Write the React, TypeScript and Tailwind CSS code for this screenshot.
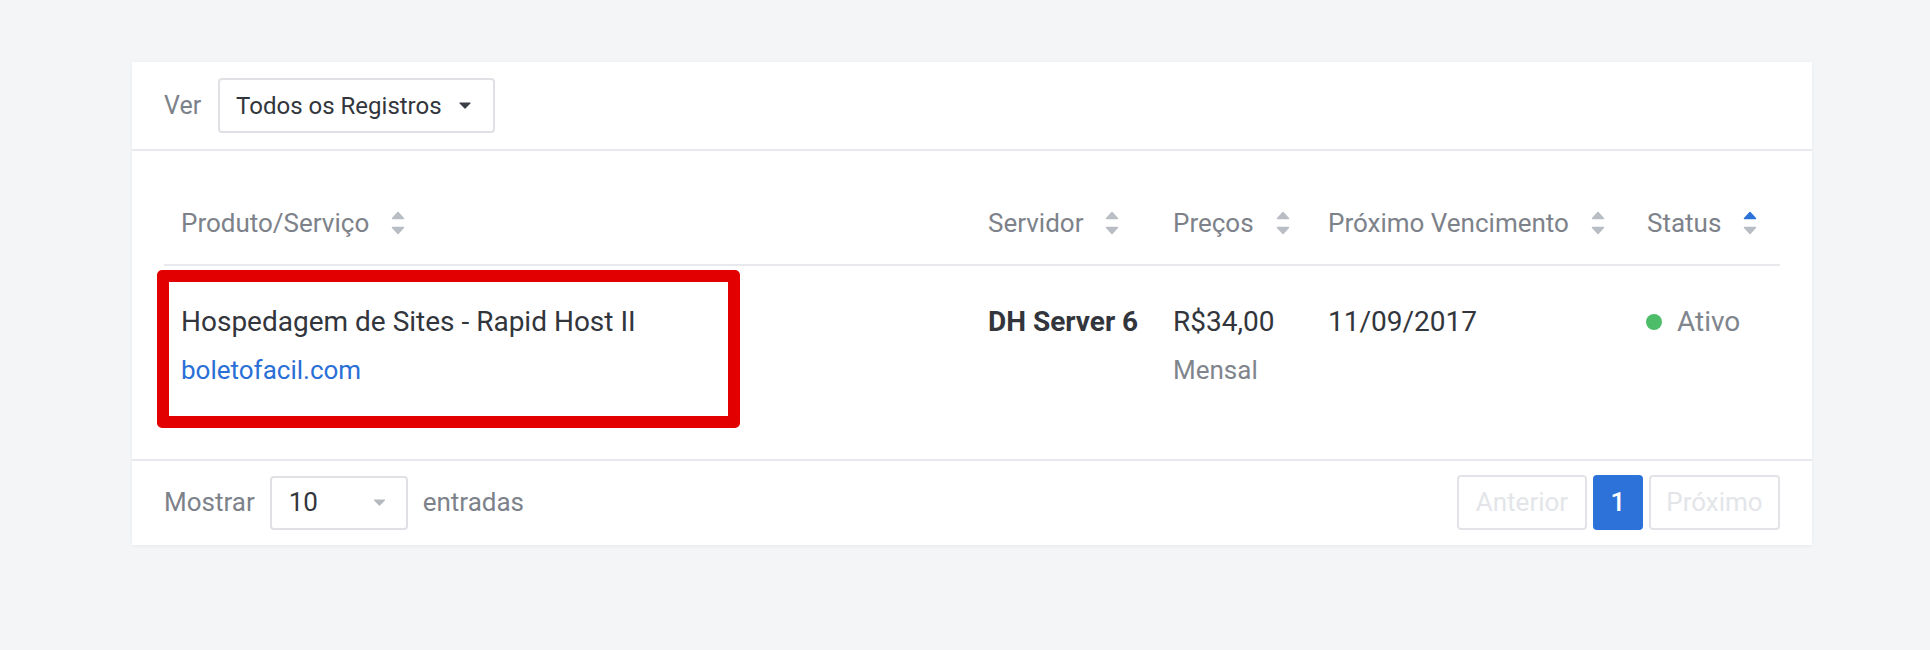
import React from 'react';

type SortState = 'none' | 'asc';

function SortIcon({ state = 'none' }: { state?: SortState }) {
  const up = state === 'asc' ? '#2d72d9' : '#b9bdc4';
  return (
    <svg width="14" height="24" viewBox="0 0 14 24" className="shrink-0">
      <path
        d="M7 1.5 L12.5 7.5 H1.5 Z"
        fill={up}
        stroke={up}
        strokeWidth="1.5"
        strokeLinejoin="round"
      />
      <path
        d="M1.5 16.5 H12.5 L7 22.5 Z"
        fill="#b9bdc4"
        stroke="#b9bdc4"
        strokeWidth="1.5"
        strokeLinejoin="round"
      />
    </svg>
  );
}

function Caret({ color, width = 12, height = 7 }: { color: string; width?: number; height?: number }) {
  return (
    <svg width={width} height={height} viewBox="0 0 12 7" className="shrink-0">
      <path
        d="M1 1 H11 L6 6 Z"
        fill={color}
        stroke={color}
        strokeWidth="1.2"
        strokeLinejoin="round"
      />
    </svg>
  );
}

const columns = [
  { label: 'Produto/Serviço', sort: 'none' as SortState },
  { label: 'Servidor', sort: 'none' as SortState },
  { label: 'Preços', sort: 'none' as SortState },
  { label: 'Próximo Vencimento', sort: 'none' as SortState },
  { label: 'Status', sort: 'asc' as SortState },
];

const gridCols = 'grid grid-cols-[807px_185px_155px_319px_150px]';

export default function App() {
  return (
    <div
      className="min-h-[650px] w-full bg-[#f4f5f7] pt-[62px]"
      style={{ fontFamily: 'Roboto, "Noto Sans", Arial, sans-serif' }}
    >
      <div className="ml-[132px] w-[1680px] bg-white shadow-[0_1px_4px_rgba(0,0,0,0.05)]">
        {/* filtro */}
        <div className="flex items-center gap-[17px] border-b-2 border-[#e8e9ed] px-8 py-4">
          <span className="text-[25px] text-[#7d828a]">Ver</span>
          <div className="flex h-[55px] w-[277px] items-center justify-between rounded-[4px] border-2 border-[#dfe1e5] pl-[16px] pr-[22px]">
            <span className="text-[24px] text-[#32363c]">Todos os Registros</span>
            <Caret color="#3a3f47" />
          </div>
        </div>

        {/* tabela */}
        <div className="px-8">
          <div className={`${gridCols} border-b-2 border-[#e8e9ed] pb-[23px] pt-[54px]`}>
            {columns.map(({ label, sort }) => (
              <div key={label} className="flex items-center gap-[22px] pl-[17px]">
                <span className="text-[26px] leading-[36px] text-[#7d828a]">{label}</span>
                <SortIcon state={sort} />
              </div>
            ))}
          </div>

          <div className={`${gridCols} pb-[69px] pt-[36px] text-[28px] leading-[40px] text-[#32363c]`}>
            <div className="relative pl-[17px]">
              <div>Hospedagem de Sites - Rapid Host II</div>
              <div className="mt-2 text-[26px] text-[#2a6fd6]">boletofacil.com</div>
              <div className="pointer-events-none absolute left-[-7px] top-[-32px] h-[158px] w-[583px] rounded-[5px] border-[12px] border-[#e30000]" />
            </div>
            <div className="pl-[17px] font-bold">DH Server 6</div>
            <div className="pl-[17px]">
              <div>R$34,00</div>
              <div className="mt-2 text-[26px] text-[#80858d]">Mensal</div>
            </div>
            <div className="pl-[17px]">11/09/2017</div>
            <div className="flex items-center gap-[15px] self-start pl-[16px]">
              <span className="h-4 w-4 rounded-full bg-[#4dbd6a]" />
              <span className="text-[#80858d]">Ativo</span>
            </div>
          </div>
        </div>

        {/* rodapé */}
        <div className="flex items-center justify-between border-t-2 border-[#e8e9ed] px-8 pb-[15px] pt-[14px]">
          <div className="flex items-center gap-[15px] text-[26px] text-[#7d828a]">
            <span>Mostrar</span>
            <div className="flex h-[54px] w-[138px] items-center justify-between rounded-[4px] border-2 border-[#dfe1e5] pl-[17px] pr-[20px]">
              <span className="text-[26px] text-[#32363c]">10</span>
              <Caret color="#b5b9c0" width={13} height={7} />
            </div>
            <span>entradas</span>
          </div>
          <div className="flex items-center gap-[6px] text-[26px]">
            <button className="h-[55px] w-[130px] rounded-[4px] border-2 border-[#e2e4e8] text-[#e3e5e9]">
              Anterior
            </button>
            <button className="h-[55px] w-[50px] rounded-[4px] bg-[#2d72d9] font-medium text-white">
              1
            </button>
            <button className="h-[55px] w-[131px] rounded-[4px] border-2 border-[#e2e4e8] text-[#e3e5e9]">
              Próximo
            </button>
          </div>
        </div>
      </div>
    </div>
  );
}
